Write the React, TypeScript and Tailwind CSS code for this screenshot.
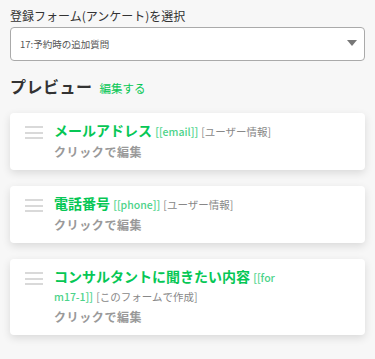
type Field = {
  label: string;
  tag: string;
  source: string;
};

const fields: Field[] = [
  { label: "メールアドレス", tag: "[[email]]", source: "[ユーザー情報]" },
  { label: "電話番号", tag: "[[phone]]", source: "[ユーザー情報]" },
  { label: "コンサルタントに聞きたい内容", tag: "[[form17-1]]", source: "[このフォームで作成]" },
];

const DragHandle = () => (
  <div className="flex w-[18px] shrink-0 flex-col gap-[3.5px] pt-[5px]">
    <span className="h-[2px] bg-[#d9d9d9]" />
    <span className="h-[2px] bg-[#d9d9d9]" />
    <span className="h-[2px] bg-[#d9d9d9]" />
  </div>
);

const FieldCard = ({ field }: { field: Field }) => (
  <div className="flex gap-[11px] rounded-[4px] bg-white py-2 pr-3 pl-[15px] shadow-[0_3px_8px_rgba(0,0,0,0.12)]">
    <DragHandle />
    <div className="w-[230px] break-all">
      <p className="text-[14px] leading-[19px]">
        <span className="font-bold text-[#06c755]">{field.label}</span>{" "}
        <span className="text-[10.5px] leading-[12px] font-medium text-[#4cd38a]">{field.tag}</span>{" "}
        <span className="text-[10.5px] leading-[12px] text-[#888]">{field.source}</span>
      </p>
      <p className="mt-[2px] text-[12px] leading-[20px] font-bold tracking-[0.6px] text-[#999]">クリックで編集</p>
    </div>
  </div>
);

export default function App() {
  return (
    <div
      className="min-h-[359px] bg-[#f7f7f7] px-[10px] pt-[7px] pb-6 text-[#333]"
      style={{ fontFamily: '"Noto Sans CJK JP", "Noto Sans", sans-serif' }}
    >
      <label className="block text-[12px] leading-[18px]">登録フォーム(アンケート)を選択</label>
      <div className="mt-[2px] flex h-[34px] items-center justify-between rounded-[4px] border border-[#aaa] bg-white pr-[7px] pl-[9px]">
        <span className="text-[9.5px] text-[#555]">17:予約時の追加質問</span>
        <svg width="10" height="6" viewBox="0 0 10 6" className="mb-[3px]">
          <path d="M0 0h10L5 6z" fill="#777" />
        </svg>
      </div>

      <div className="mt-[13px] flex items-baseline gap-[7px]">
        <h2 className="text-[16px] leading-[24px] font-bold tracking-[0.5px]">プレビュー</h2>
        <button type="button" className="text-[11.5px] text-[#06c755]">編集する</button>
      </div>

      <div className="mt-[15px] flex flex-col gap-4">
        {fields.map((field) => (
          <FieldCard key={field.tag} field={field} />
        ))}
      </div>
    </div>
  );
}
